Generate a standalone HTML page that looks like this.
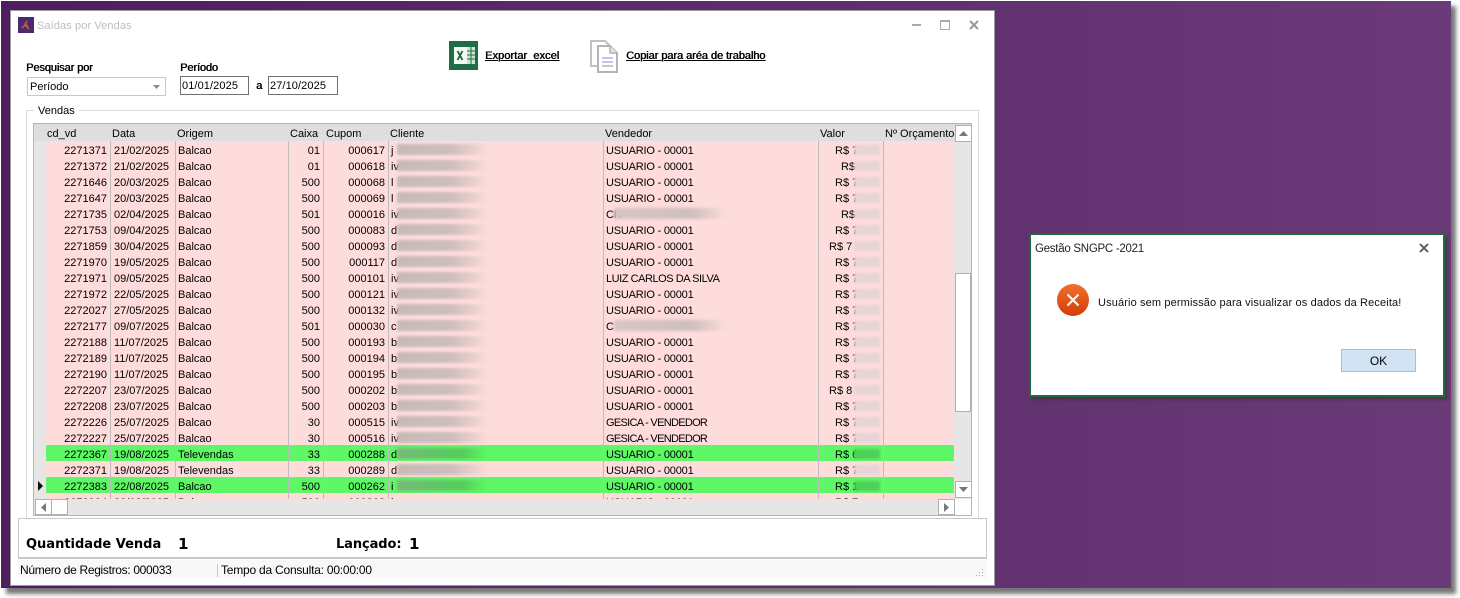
<!DOCTYPE html>
<html><head><meta charset="utf-8"><style>
html,body{margin:0;padding:0;background:#fff;}
body{width:1460px;height:598px;position:relative;overflow:hidden;font:11px "Liberation Sans",sans-serif;color:#000;}
div,span{position:absolute;box-sizing:border-box;white-space:nowrap;}
#sh{left:6px;top:6px;width:1450px;height:588px;background:#777;filter:blur(2px);}
#bg{left:1px;top:1px;width:1450px;height:587px;background:linear-gradient(90deg,#4d1e5e,#6b3a78);}
#win{left:10px;top:10px;width:985px;height:576px;background:#fff;border:1px solid #9a9a9a;}
.abs{line-height:14px;}
.fb{text-shadow:.5px 0 0 #000;}
#grid{left:33px;top:123px;width:939px;height:393px;background:#e6e6e6;border:1px solid #b4b4b4;overflow:hidden;}
#hd{left:0;top:0;width:937px;height:17px;background:#dedede;}
#hd span{top:3px;line-height:14px;}
#rows{left:12px;top:17px;width:908px;height:358px;overflow:hidden;}
.r{left:0;width:908px;height:16px;background:#ffdcdc;line-height:16px;}
.r.g{background:#5ef866;}
.r span{top:3px;line-height:15px;}
.a{right:847px;}.b{left:68px;}.c{left:132px;}.d{right:634px;}.e{right:569px;}.f{left:345px;}.h{left:560px;letter-spacing:-.2px;}.v{left:789px;}
.l{top:0;width:1px;height:358px;background:#bcbcbc;}
.bl{top:3px!important;height:11px;left:351px;width:92px;background:linear-gradient(90deg,#c8b9b7,#ccbfbd 60%,#ffdcdc);filter:blur(1.4px);}
.g .bl{background:linear-gradient(90deg,#7ab87c,#55cc5c 70%,#5ef866);}
.bv{top:4px!important;height:10px;left:808px;width:26px;background:#e8d4d6;filter:blur(1.4px);}
.g .bv{background:#4fcf58;}
.bh{top:3px!important;height:11px;left:568px;width:112px;background:linear-gradient(90deg,#d8c4c4,#ccbfbd 70%,#ffdcdc);filter:blur(1.6px);}
.sb{background:#fff;border:1px solid #b0b0b0;}
</style></head><body>
<div id="sh"></div><div id="bg"></div>
<div id="win"></div>

<svg style="position:absolute;left:18px;top:17px" width="16" height="16"><rect width="16" height="16" fill="#4a2a72"/><path d="M9 4 7 8l3 1M7 8l-3 3M8 9l3 3" stroke="#d8602a" stroke-width="1.500" fill="none"/></svg>
<span class="abs" style="left:37px;top:19px;color:#bdbdbd;letter-spacing:.1px">Saídas por Vendas</span>
<div style="left:912px;top:24px;width:9px;height:2px;background:#aaa"></div>
<div style="left:940px;top:20px;width:10px;height:10px;border:1px solid #aaa;border-top-width:2px"></div>
<svg style="position:absolute;left:969px;top:20px" width="10" height="10"><path d="M1 1 9 9M9 1 1 9" stroke="#999" stroke-width="2"/></svg>

<span class="abs fb" style="left:26px;top:61px;letter-spacing:-.1px">Pesquisar por</span>
<span class="abs fb" style="left:180px;top:61px;letter-spacing:-.1px">Período</span>
<div style="left:27px;top:77px;width:139px;height:19px;border:1px solid #c8c8c8;background:#fff"></div>
<span class="abs" style="left:30px;top:80px">Período</span>
<svg style="position:absolute;left:153px;top:85px" width="7" height="4"><path d="M0 0h7L3.500 4z" fill="#888"/></svg>
<div style="left:180px;top:76px;width:69px;height:19px;border:1px solid #707070;background:#fff"></div>
<span class="abs" style="left:182px;top:79px;letter-spacing:.1px">01/01/2025</span>
<span class="abs fb" style="left:256px;top:79px">a</span>
<div style="left:268px;top:76px;width:70px;height:19px;border:1px solid #707070;background:#fff"></div>
<span class="abs" style="left:270px;top:79px;letter-spacing:.1px">27/10/2025</span>

<svg style="position:absolute;left:449px;top:41px" width="29" height="29"><rect width="29" height="29" fill="#1f6e43"/><rect x="5" y="6" width="14" height="17" fill="#fff" opacity=".95"/><rect x="18" y="6" width="8" height="17" fill="#cfe3d6"/><path d="M18 10h8M18 14h8M18 18h8M22 6v17" stroke="#1f6e43"/><path d="M8.500 10l5 9M13.500 10l-5 9" stroke="#1f5e3a" stroke-width="1.800"/></svg>
<span class="abs fb" style="left:485px;top:49px;text-decoration:underline;letter-spacing:.05px">Exportar&nbsp; excel</span>
<svg style="position:absolute;left:590px;top:40px" width="29" height="33"><path d="M1 1h14l6 6v19H1z" fill="#fff" stroke="#c2c2c2" stroke-width="2"/><path d="M8 6h12l7 7v19H8z" fill="#fff" stroke="#b4b4b4" stroke-width="2"/><path d="M20 6v7h7" fill="#e6e6e6" stroke="#b4b4b4" stroke-width="1.500"/><path d="M12 18h11M12 22h11M12 26h11" stroke="#b9cbdc" stroke-width="2"/></svg>
<span class="abs fb" style="left:626px;top:49px;text-decoration:underline;letter-spacing:-.05px">Copiar para aréa de trabalho</span>

<div style="left:26px;top:110px;width:953px;height:408px;border:1px solid #dcdcdc;border-bottom:0"></div>
<span class="abs" style="left:34px;top:104px;background:#fff;padding:0 4px">Vendas</span>

<div id="grid">
<div id="hd">
<span style="left:13px">cd_vd</span><span style="left:78px">Data</span><span style="left:143px">Origem</span><span style="left:256px">Caixa</span><span style="left:292px">Cupom</span><span style="left:356px">Cliente</span><span style="left:571px">Vendedor</span><span style="left:786px">Valor</span><span style="left:851px">Nº Orçamento</span>
</div>
<div id="rows">
<div class="r" style="top:0"><span class="a">2271371</span><span class="b">21/02/2025</span><span class="c">Balcao</span><span class="d">01</span><span class="e">000617</span><span class="f">j</span><span class="bl"></span><span class="h">USUARIO - 00001</span><span class="v">R$ 7</span><span class="bv"></span></div>
<div class="r" style="top:16px"><span class="a">2271372</span><span class="b">21/02/2025</span><span class="c">Balcao</span><span class="d">01</span><span class="e">000618</span><span class="f">iv</span><span class="bl"></span><span class="h">USUARIO - 00001</span><span class="v" style="left:795px">R$</span><span class="bv"></span></div>
<div class="r" style="top:32px"><span class="a">2271646</span><span class="b">20/03/2025</span><span class="c">Balcao</span><span class="d">500</span><span class="e">000068</span><span class="f">l</span><span class="bl"></span><span class="h">USUARIO - 00001</span><span class="v">R$ 7</span><span class="bv"></span></div>
<div class="r" style="top:48px"><span class="a">2271647</span><span class="b">20/03/2025</span><span class="c">Balcao</span><span class="d">500</span><span class="e">000069</span><span class="f">l</span><span class="bl"></span><span class="h">USUARIO - 00001</span><span class="v">R$ 7</span><span class="bv"></span></div>
<div class="r" style="top:64px"><span class="a">2271735</span><span class="b">02/04/2025</span><span class="c">Balcao</span><span class="d">501</span><span class="e">000016</span><span class="f">iv</span><span class="bl"></span><span class="h">CR</span><span class="bh"></span><span class="v" style="left:795px">R$</span><span class="bv"></span></div>
<div class="r" style="top:80px"><span class="a">2271753</span><span class="b">09/04/2025</span><span class="c">Balcao</span><span class="d">500</span><span class="e">000083</span><span class="f">d</span><span class="bl"></span><span class="h">USUARIO - 00001</span><span class="v">R$ 7</span><span class="bv"></span></div>
<div class="r" style="top:96px"><span class="a">2271859</span><span class="b">30/04/2025</span><span class="c">Balcao</span><span class="d">500</span><span class="e">000093</span><span class="f">d</span><span class="bl"></span><span class="h">USUARIO - 00001</span><span class="v" style="left:783px">R$ 7</span><span class="bv"></span></div>
<div class="r" style="top:112px"><span class="a">2271970</span><span class="b">19/05/2025</span><span class="c">Balcao</span><span class="d">500</span><span class="e">000117</span><span class="f">d</span><span class="bl"></span><span class="h">USUARIO - 00001</span><span class="v">R$ 7</span><span class="bv"></span></div>
<div class="r" style="top:128px"><span class="a">2271971</span><span class="b">09/05/2025</span><span class="c">Balcao</span><span class="d">500</span><span class="e">000101</span><span class="f">iv</span><span class="bl"></span><span class="h" style="letter-spacing:-.45px">LUIZ CARLOS DA SILVA</span><span class="v">R$ 7</span><span class="bv"></span></div>
<div class="r" style="top:144px"><span class="a">2271972</span><span class="b">22/05/2025</span><span class="c">Balcao</span><span class="d">500</span><span class="e">000121</span><span class="f">iv</span><span class="bl"></span><span class="h">USUARIO - 00001</span><span class="v">R$ 7</span><span class="bv"></span></div>
<div class="r" style="top:160px"><span class="a">2272027</span><span class="b">27/05/2025</span><span class="c">Balcao</span><span class="d">500</span><span class="e">000132</span><span class="f">iv</span><span class="bl"></span><span class="h">USUARIO - 00001</span><span class="v">R$ 7</span><span class="bv"></span></div>
<div class="r" style="top:176px"><span class="a">2272177</span><span class="b">09/07/2025</span><span class="c">Balcao</span><span class="d">501</span><span class="e">000030</span><span class="f">c</span><span class="bl"></span><span class="h">C</span><span class="bh"></span><span class="v">R$ 7</span><span class="bv"></span></div>
<div class="r" style="top:192px"><span class="a">2272188</span><span class="b">11/07/2025</span><span class="c">Balcao</span><span class="d">500</span><span class="e">000193</span><span class="f">b</span><span class="bl"></span><span class="h">USUARIO - 00001</span><span class="v">R$ 7</span><span class="bv"></span></div>
<div class="r" style="top:208px"><span class="a">2272189</span><span class="b">11/07/2025</span><span class="c">Balcao</span><span class="d">500</span><span class="e">000194</span><span class="f">b</span><span class="bl"></span><span class="h">USUARIO - 00001</span><span class="v">R$ 7</span><span class="bv"></span></div>
<div class="r" style="top:224px"><span class="a">2272190</span><span class="b">11/07/2025</span><span class="c">Balcao</span><span class="d">500</span><span class="e">000195</span><span class="f">b</span><span class="bl"></span><span class="h">USUARIO - 00001</span><span class="v">R$ 7</span><span class="bv"></span></div>
<div class="r" style="top:240px"><span class="a">2272207</span><span class="b">23/07/2025</span><span class="c">Balcao</span><span class="d">500</span><span class="e">000202</span><span class="f">b</span><span class="bl"></span><span class="h">USUARIO - 00001</span><span class="v" style="left:783px">R$ 8</span><span class="bv"></span></div>
<div class="r" style="top:256px"><span class="a">2272208</span><span class="b">23/07/2025</span><span class="c">Balcao</span><span class="d">500</span><span class="e">000203</span><span class="f">b</span><span class="bl"></span><span class="h">USUARIO - 00001</span><span class="v">R$ 7</span><span class="bv"></span></div>
<div class="r" style="top:272px"><span class="a">2272226</span><span class="b">25/07/2025</span><span class="c">Balcao</span><span class="d">30</span><span class="e">000515</span><span class="f">iv</span><span class="bl"></span><span class="h" style="letter-spacing:-.7px">GESICA - VENDEDOR</span><span class="v">R$ 7</span><span class="bv"></span></div>
<div class="r" style="top:288px"><span class="a">2272227</span><span class="b">25/07/2025</span><span class="c">Balcao</span><span class="d">30</span><span class="e">000516</span><span class="f">iv</span><span class="bl"></span><span class="h" style="letter-spacing:-.7px">GESICA - VENDEDOR</span><span class="v">R$ 7</span><span class="bv"></span></div>
<div class="r g" style="top:304px"><span class="a">2272367</span><span class="b">19/08/2025</span><span class="c">Televendas</span><span class="d">33</span><span class="e">000288</span><span class="f">d</span><span class="bl"></span><span class="h">USUARIO - 00001</span><span class="v">R$ 6</span><span class="bv"></span></div>
<div class="r" style="top:320px"><span class="a">2272371</span><span class="b">19/08/2025</span><span class="c">Televendas</span><span class="d">33</span><span class="e">000289</span><span class="f">d</span><span class="bl"></span><span class="h">USUARIO - 00001</span><span class="v">R$ 7</span><span class="bv"></span></div>
<div class="r g" style="top:336px"><span class="a">2272383</span><span class="b">22/08/2025</span><span class="c">Balcao</span><span class="d">500</span><span class="e">000262</span><span class="f">i</span><span class="bl"></span><span class="h">USUARIO - 00001</span><span class="v">R$ 1</span><span class="bv"></span></div>
<div class="r" style="top:352px"><span class="a">2272384</span><span class="b">22/08/2025</span><span class="c">Balcao</span><span class="d">500</span><span class="e">000263</span><span class="f">i</span><span class="h">USUARIO - 00001</span><span class="v">R$ 7</span></div>
<div class="l" style="left:64px"></div><div class="l" style="left:129px"></div><div class="l" style="left:242px"></div><div class="l" style="left:277px"></div><div class="l" style="left:342px"></div><div class="l" style="left:557px"></div><div class="l" style="left:772px"></div><div class="l" style="left:837px"></div>
</div>
<svg style="position:absolute;left:4px;top:357px" width="6" height="10"><path d="M0 0l5 5-5 5z" fill="#111"/></svg>
<div class="sb" style="left:921px;top:1px;width:17px;height:17px"></div>
<svg style="position:absolute;left:925px;top:7px" width="9" height="5"><path d="M0 5h9L4.500 0z" fill="#777"/></svg>
<div class="sb" style="left:921px;top:149px;width:16px;height:139px"></div>
<div class="sb" style="left:921px;top:357px;width:17px;height:17px"></div>
<svg style="position:absolute;left:925px;top:363px" width="9" height="5"><path d="M0 0h9L4.500 5z" fill="#777"/></svg>
<div class="sb" style="left:1px;top:375px;width:17px;height:16px"></div>
<svg style="position:absolute;left:7px;top:379px" width="5" height="9"><path d="M5 0v9L0 4.500z" fill="#777"/></svg>
<div class="sb" style="left:17px;top:375px;width:17px;height:16px"></div>
<div class="sb" style="left:904px;top:375px;width:17px;height:16px"></div>
<svg style="position:absolute;left:910px;top:379px" width="5" height="9"><path d="M0 0v9l5-4.500z" fill="#777"/></svg>
<div style="left:921px;top:375px;width:17px;height:17px;background:#fff"></div>
</div>

<div style="left:18px;top:518px;width:969px;height:41px;border:1px solid #c8c8c8;border-bottom-width:2px;background:#fff"></div>
<span class="abs" style="left:26px;top:537px;font:bold 13px/15px 'DejaVu Sans',sans-serif">Quantidade Venda</span>
<span class="abs" style="left:178px;top:536px;font:bold 15px/17px 'DejaVu Sans',sans-serif">1</span>
<span class="abs" style="left:336px;top:537px;font:bold 13px/15px 'DejaVu Sans',sans-serif;letter-spacing:-.1px">Lançado:</span>
<span class="abs" style="left:409px;top:536px;font:bold 15px/17px 'DejaVu Sans',sans-serif">1</span>

<div style="left:18px;top:560px;width:969px;height:18px;background:#f8f8f8"></div>
<span class="abs" style="left:20px;top:563px;font-size:12px;letter-spacing:-.32px">Número de Registros: 000033</span>
<div style="left:217px;top:564px;width:1px;height:13px;background:#c8c8c8"></div>
<span class="abs" style="left:221px;top:563px;font-size:12px;letter-spacing:-.22px">Tempo da Consulta: 00:00:00</span>
<svg style="position:absolute;left:975px;top:569px" width="9" height="9"><path d="M7 0h1v1H7zM4 3h1v1H4zM7 3h1v1H7zM1 6h1v1H1zM4 6h1v1H4zM7 6h1v1H7z" fill="#aaa"/></svg>

<div style="left:1032px;top:236px;width:416px;height:164px;background:#333;opacity:.55;filter:blur(1.5px)"></div>
<div style="left:1029px;top:233px;width:416px;height:164px;background:#fff;border:2px solid #1f6b3a"></div>
<span class="abs" style="left:1035px;top:241px;font-size:11.500px;letter-spacing:-.27px;line-height:14px;color:#222;margin-top:1px">Gestão SNGPC -2021</span>
<svg style="position:absolute;left:1419px;top:243px" width="10" height="10"><path d="M1 1 9 9M9 1 1 9" stroke="#555" stroke-width="1.800"/></svg>
<svg style="position:absolute;left:1057px;top:284px" width="32" height="32"><defs><linearGradient id="eg" x1="0" y1="0" x2="0" y2="1"><stop offset="0" stop-color="#f0702e"/><stop offset="1" stop-color="#d43c08"/></linearGradient></defs><circle cx="16" cy="16" r="16" fill="url(#eg)"/><path d="M10.500 10.500 21.500 21.500M21.500 10.500 10.500 21.500" stroke="#fff" stroke-width="2"/></svg>
<span class="abs" style="left:1098px;top:296px;letter-spacing:.13px;color:#111">Usuário sem permissão para visualizar os dados da Receita!</span>
<div style="left:1341px;top:349px;width:75px;height:23px;background:#d2e4f3;border:1px solid #9dc0df;text-align:center;line-height:23px;font-size:12px;position:absolute">OK</div>
</body></html>
